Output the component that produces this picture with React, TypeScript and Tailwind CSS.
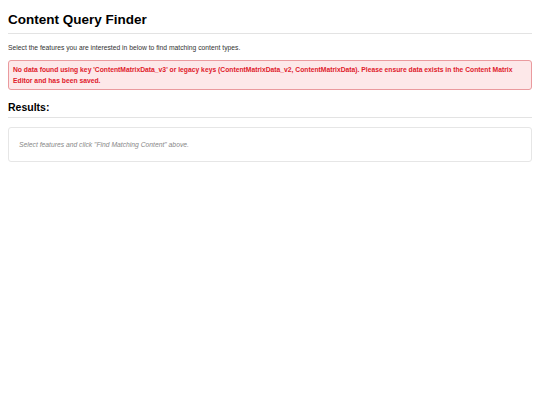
import React from 'react';

const App: React.FC = () => {
  return (
    <div className="min-h-screen bg-white px-2 pt-[11px] text-[#222] font-['Liberation_Sans',Arial,sans-serif]">
      {/* Header */}
      <h1 className="text-[13.5px] font-bold leading-[18px] pb-[4px] border-b border-[#e3e3e3] text-black">
        Content Query Finder
      </h1>
      <p className="text-[6.75px] leading-[9px] mt-[9px] text-[#333]">
        Select the features you are interested in below to find matching content types.
      </p>

      {/* Error message */}
      <div className="mt-[8px] bg-[#fde8e9] border border-[#ea9a9e] rounded-[3px] px-[4px] py-[3px] text-[6.75px] leading-[11px] font-bold text-[#e0202b]">
        No data found using key 'ContentMatrixData_v3' or legacy keys (ContentMatrixData_v2, ContentMatrixData). Please ensure data exists in the Content Matrix Editor and has been saved.
      </div>

      {/* Results */}
      <h2 className="mt-[10px] text-[10.5px] font-bold leading-[14px] pb-[3px] border-b border-[#e3e3e3] text-black">
        Results:
      </h2>
      <div className="mt-[9px] border border-[#e6e6e6] rounded-[3px] px-[10px] py-[12px]">
        <p className="text-[6.75px] leading-[9px] italic text-[#888]">
          Select features and click "Find Matching Content" above.
        </p>
      </div>
    </div>
  );
};

export default App;
